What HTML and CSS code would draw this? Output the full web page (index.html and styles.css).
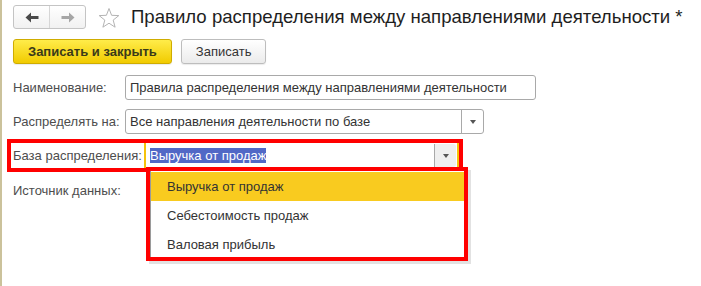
FILE: index.html
```html
<!DOCTYPE html>
<html lang="ru">
<head>
    <meta charset="UTF-8">
    <link rel="stylesheet" href="styles.css">
</head>
<body>
    <div class="window">
        <div class="head">
            <div class="nav">
                <span class="nav-btn">
                    <svg width="14" height="11" viewBox="0 0 14 11"><path d="M0.5 5.5 L6 0.5 L6 4 L13.5 4 L13.5 7 L6 7 L6 10.5 Z" fill="#4a4a4a"/></svg>
                </span>
                <span class="nav-btn">
                    <svg width="14" height="11" viewBox="0 0 14 11"><path d="M13.5 5.5 L8 0.5 L8 4 L0.5 4 L0.5 7 L8 7 L8 10.5 Z" fill="#a6a6a6"/></svg>
                </span>
            </div>
            <svg class="star" width="22" height="22" viewBox="0 0 22 22">
                <polygon points="11,1.5 13.6,8.3 20.8,8.6 15.2,13.1 17.1,20.2 11,16.2 4.9,20.2 6.8,13.1 1.2,8.6 8.4,8.3" fill="#fff" stroke="#b4b4b4" stroke-width="1"/>
            </svg>
            <h1 class="title">Правило распределения между направлениями деятельности *</h1>
        </div>

        <div class="toolbar">
            <button class="btn btn-default">Записать и закрыть</button>
            <button class="btn">Записать</button>
        </div>

        <div class="form">
            <div class="row">
                <span class="label">Наименование:</span>
                <div class="field field-name">Правила распределения между направлениями деятельности</div>
            </div>
            <div class="row">
                <span class="label">Распределять на:</span>
                <div class="field field-select">
                    <span class="value">Все направления деятельности по базе</span>
                    <span class="drop"><i class="tri"></i></span>
                </div>
            </div>
            <!-- marked row -->
            <div class="row row-marked">
                <span class="label label-wide">База распределения:</span>
                <div class="field field-active">
                    <span class="value"><span class="selected">Выручка от продаж</span></span>
                    <span class="drop drop-active"><i class="tri"></i></span>
                </div>
            </div>
            <div class="row row-last">
                <span class="label">Источник данных:</span>
            </div>
        </div>

        <div class="popup">
            <div class="popup__list">
                <div class="popup__item popup__item--current">Выручка от продаж</div>
                <div class="popup__item">Себестоимость продаж</div>
                <div class="popup__item">Валовая прибыль</div>
            </div>
        </div>
    </div>
</body>
</html>
```

FILE: styles.css
```css
body {
    margin: 0;
    padding: 0;
    background: #fff;
    font-family: 'Liberation Sans', Arial, sans-serif;
    font-size: 13px;
    color: #333;
}

.window {
    position: relative;
    height: 286px;
    box-sizing: border-box;
    border-left: 2px solid #cbc29b;
    padding-left: 11px;
    overflow: hidden;
}

/* header */
.head {
    display: flex;
    align-items: center;
    height: 24px;
    margin-top: 5px;
}

.nav {
    display: flex;
    width: 73px;
    height: 24px;
    box-sizing: border-box;
    border: 1px solid #c4c4c4;
    border-radius: 3px;
    background: linear-gradient(#ffffff, #f1f1f1);
}

.nav-btn {
    flex: 1;
    display: flex;
    align-items: center;
    justify-content: center;
}

.nav-btn + .nav-btn {
    border-left: 1px solid #d6d6d6;
}

.star {
    margin-left: 12px;
    margin-top: 2px;
}

.title {
    margin: 0 0 0 11px;
    font-size: 18.6px;
    font-weight: normal;
    color: #1e1e1e;
    white-space: nowrap;
}

/* buttons */
.toolbar {
    display: flex;
    gap: 9px;
    margin-top: 10px;
}

.btn {
    height: 25px;
    padding: 0 14px;
    font-family: inherit;
    font-size: 13px;
    color: #333;
    border: 1px solid #bdbdbd;
    border-radius: 3px;
    background: linear-gradient(#ffffff, #ebebeb);
    box-shadow: 0 1px 1px rgba(0, 0, 0, 0.08);
}

.btn-default {
    font-weight: bold;
    color: #3a3a1a;
    border-color: #cfac00;
    background: linear-gradient(#ffec4a, #f1cb00);
}

/* form */
.row {
    display: flex;
    align-items: center;
    height: 25px;
    margin-top: 9px;
}

.row:first-child {
    margin-top: 11px;
}

.label {
    width: 112px;
    flex-shrink: 0;
    color: #4d4d4d;
}

.field {
    display: flex;
    align-items: center;
    height: 25px;
    box-sizing: border-box;
    border: 1px solid #a9a9a9;
    border-radius: 3px;
    background: #fff;
    color: #333;
}

.field-name {
    width: 411px;
    padding-left: 4px;
}

.field-select {
    width: 359px;
}

.value {
    flex: 1;
    padding-left: 4px;
    white-space: nowrap;
}

.drop {
    width: 21px;
    height: 100%;
    border-left: 1px solid #a9a9a9;
    display: flex;
    align-items: center;
    justify-content: center;
}

.tri {
    display: block;
    width: 0;
    height: 0;
    border-left: 3px solid transparent;
    border-right: 3px solid transparent;
    border-top: 4px solid #555;
}

/* row surrounded by the red mark */
.row-marked {
    width: 456px;
    height: 33px;
    box-sizing: border-box;
    margin-top: 5px;
    margin-left: -6px;
    padding-left: 2px;
    border: 4px solid #ff0000;
}

.label-wide {
    width: 131px;
}

.field-active {
    width: 315px;
    height: 25px;
    border: none;
    border-left: 2px solid #f5c30c;
    border-right: 2px solid #f5c30c;
    border-radius: 0;
}

.field-active .value {
    padding-left: 4px;
}

.selected {
    background: #5168c6;
    color: #fff;
    line-height: 15px;
    display: inline-block;
}

.drop-active {
    height: 23px;
    margin-right: 1px;
    background: #efefef;
    border-radius: 0 3px 3px 0;
}

.row-last {
    margin-top: 6px;
}

/* dropdown list */
.popup {
    position: absolute;
    left: 144px;
    top: 167px;
    width: 322px;
    height: 94px;
    box-sizing: border-box;
    border: 4px solid #ff0000;
    background: #fff;
    box-shadow: 3px 3px 0 #e2e2e2;
    overflow: hidden;
}

.popup__list {
    border-left: 1px solid #9a9a9a;
    padding-top: 1px;
}

.popup__item {
    height: 29px;
    line-height: 29px;
    padding-left: 16px;
    color: #333;
}

.popup__item--current {
    background: #f9cb1f;
}
```
